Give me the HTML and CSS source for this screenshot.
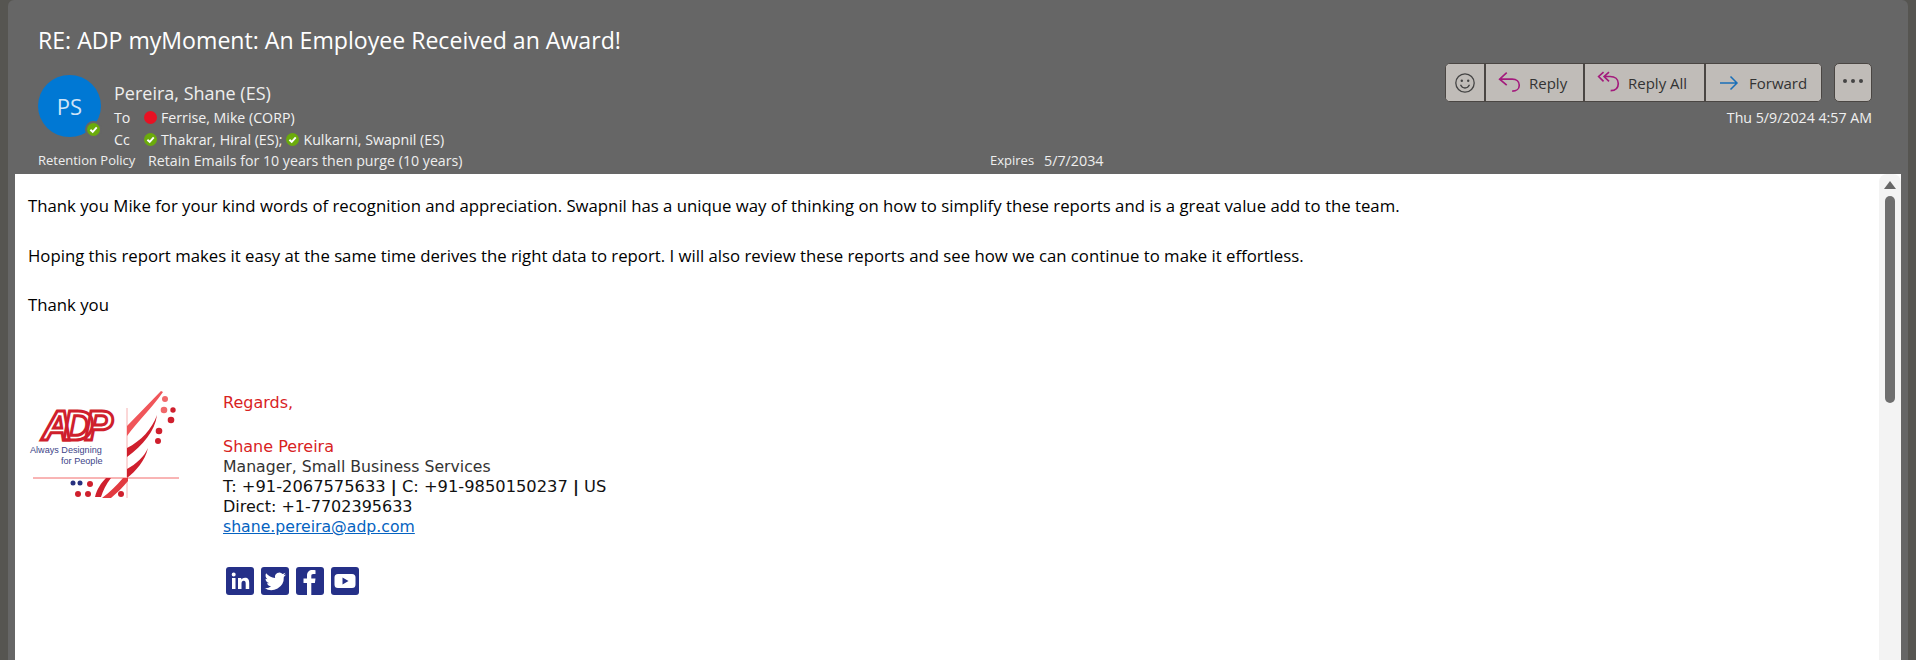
FILE: index.html
```html
<!DOCTYPE html>
<html lang="en">

<head>
    <meta charset="UTF-8">
    <meta name="viewport" content="width=device-width, initial-scale=1.0">
    <title>RE: ADP myMoment: An Employee Received an Award!</title>
    <link rel="stylesheet" href="styles.css">
</head>

<body>
    <div class="ventana">
        <header class="cabecera">
            <h1 class="asunto">RE: ADP myMoment: An Employee Received an Award!</h1>
            <div class="fila-remitente">
                <div class="avatar">PS
                    <span class="presencia presencia-avatar">
                        <svg viewBox="0 0 10 10"><path d="M2.6 5.2 4.4 6.9 7.5 3.4" /></svg>
                    </span>
                </div>
                <div class="datos">
                    <div class="remitente">Pereira, Shane (ES)</div>
                    <div class="linea linea-to">
                        <span class="etiqueta">To</span>
                        <span class="punto-rojo"></span>
                        <span>Ferrise, Mike (CORP)</span>
                    </div>
                    <div class="linea">
                        <span class="etiqueta">Cc</span>
                        <span class="presencia"><svg viewBox="0 0 10 10"><path d="M2.6 5.2 4.4 6.9 7.5 3.4" /></svg></span>
                        <span>Thakrar, Hiral (ES);</span>
                        <span class="presencia"><svg viewBox="0 0 10 10"><path d="M2.6 5.2 4.4 6.9 7.5 3.4" /></svg></span>
                        <span>Kulkarni, Swapnil (ES)</span>
                    </div>
                </div>
                <div class="acciones">
                    <div class="botones">
                        <div class="grupo">
                            <button class="boton boton-cara">
                                <svg class="icono" width="22" height="22" viewBox="0 0 22 22">
                                    <circle cx="11" cy="11" r="9.2" class="trazo-gris" />
                                    <circle cx="7.8" cy="8.8" r="1.2" class="relleno-gris" />
                                    <circle cx="14.2" cy="8.8" r="1.2" class="relleno-gris" />
                                    <path d="M6.5 12.8c1 2.2 2.6 3.2 4.5 3.2s3.5-1 4.5-3.2" class="trazo-gris" />
                                </svg>
                            </button>
                            <button class="boton boton-reply">
                                <svg class="icono" width="24" height="24" viewBox="0 0 22 22">
                                    <path d="M8 1.5 1.5 7.5 8 13M1.5 7.5H13c4 0 6.5 2.3 6.5 5.5s-2.5 5.5-6.5 5.5" class="trazo-magenta" />
                                </svg>
                                Reply
                            </button>
                            <button class="boton boton-replyall">
                                <svg class="icono" width="24" height="24" viewBox="0 0 22 22">
                                    <path d="M6 1 1.5 5 6 9.5M11 1 6.5 5 11 9.5M6.5 5H12c4.5 0 7.5 2.5 7.5 6.5s-2.5 6.5-7 6.5" class="trazo-magenta" />
                                </svg>
                                Reply All
                            </button>
                            <button class="boton boton-forward">
                                <svg class="icono" width="20" height="18" viewBox="0 0 20 18">
                                    <path d="M11.5 2.5 18 9l-6.5 6.5M18 9H1" class="trazo-azul" />
                                </svg>
                                Forward
                            </button>
                        </div>
                        <button class="boton boton-mas">
                            <span></span><span></span><span></span>
                        </button>
                    </div>
                    <div class="fecha">Thu 5/9/2024 4:57 AM</div>
                </div>
            </div>
            <div class="retencion">
                <span class="ret-etiqueta">Retention Policy</span>
                <span class="ret-valor">Retain Emails for 10 years then purge (10 years)</span>
                <span class="ret-expira">Expires</span>
                <span class="ret-fecha">5/7/2034</span>
            </div>
        </header>

        <div class="cuerpo">
            <main class="mensaje">
                <p class="parrafo">Thank you Mike for your kind words of recognition and appreciation. Swapnil has a unique way of thinking on how to simplify these reports and is a great value add to the team.</p>
                <p class="parrafo">Hoping this report makes it easy at the same time derives the right data to report. I will also review these reports and see how we can continue to make it effortless.</p>
                <p class="parrafo">Thank you</p>

                <div class="firma">
                    <!-- logo ADP dibujado a mano -->
                    <svg class="logo" width="151" height="108" viewBox="-5 0 151 108">
                        <text x="9" y="49" class="logo-marca">ADP</text>
                        <text x="-3" y="62" class="logo-lema">Always Designing</text>
                        <text x="28" y="73" class="logo-lema">for People</text>
                        <path d="M0 87H146" stroke="#f26a6a" stroke-width="1" />
                        <path d="M94 17V107" stroke="#f7b0b0" stroke-width="1" />
                        <path d="M94 35 128 0l2 1C118 18 105 30 94 45Z" fill="#f0565a" />
                        <path d="M94 57C108 50 119 38 124 24 122 40 110 54 94 66Z" fill="#cf1f2d" />
                        <path d="M94 78C103 73 111 66 115 57 112 70 103 80 94 87Z" fill="#cf1f2d" />
                        <path d="M62 106C64 98 68 92 73 87H78C73 93 70 100 68 106Z" fill="#cf1f2d" />
                        <path d="M69 107C77 101 83 95 90 87H95V90C90 96 84 102 78 107Z" fill="#e23a40" />
                        <circle cx="132" cy="8" r="3" fill="#f0686a" />
                        <circle cx="131" cy="19" r="3.3" fill="#f0686a" />
                        <circle cx="140" cy="19" r="2.7" fill="#cf1f2d" />
                        <circle cx="138" cy="29" r="3.3" fill="#cf1f2d" />
                        <circle cx="126" cy="40" r="3.3" fill="#cf1f2d" />
                        <circle cx="125" cy="50" r="3" fill="#cf1f2d" />
                        <circle cx="40" cy="92" r="2.5" fill="#26307f" />
                        <circle cx="47" cy="92" r="2.5" fill="#26307f" />
                        <circle cx="57" cy="93" r="3" fill="#cf1f2d" />
                        <circle cx="45" cy="103" r="3" fill="#cf1f2d" />
                        <circle cx="55" cy="103" r="3" fill="#cf1f2d" />
                        <circle cx="88" cy="103" r="3" fill="#cf1f2d" />
                    </svg>
                    <div class="firma-texto">
                        <div class="rojo">Regards,</div>
                        <div class="espacio"></div>
                        <div class="rojo">Shane Pereira</div>
                        <div class="gris">Manager, Small Business Services</div>
                        <div class="telefonos">T: +91-2067575633 <b>|</b> C: +91-9850150237 <b>|</b> US</div>
                        <div>Direct: +1-7702395633</div>
                        <a class="correo" href="#">shane.pereira@adp.com</a>
                        <div class="redes">
                            <span class="red">
                                <svg viewBox="0 0 28 28"><path d="M6 11h3.5v11H6zM7.7 5.5a2 2 0 1 1 0 4 2 2 0 0 1 0-4zM12 11h3.3v1.6c.7-1.1 2-1.9 3.7-1.900 3.100 0 4.200 2 4.200 5V22h-3.500v-5.500c0-1.600-.5-2.700-1.900-2.700-1.600 0-2.300 1.200-2.300 2.800V22H12z" /></svg>
                            </span>
                            <span class="red">
                                <svg viewBox="0 0 28 28"><path d="M25 7.5c-.8.4-1.700.6-2.500.7.9-.6 1.600-1.400 1.900-2.400-.9.500-1.800.9-2.800 1.100a4.400 4.400 0 0 0-7.500 4C10.500 10.700 7.300 9 5.100 6.300c-1.100 2-.6 4.500 1.400 5.900-.7 0-1.400-.2-2-.5 0 2.100 1.500 4 3.500 4.400-.6.200-1.300.2-2 .1.600 1.800 2.200 3 4.100 3.100A9 9 0 0 1 3.500 21.100 12.500 12.500 0 0 0 22.800 10c.9-.7 1.600-1.500 2.200-2.500z" /></svg>
                            </span>
                            <span class="red">
                                <svg viewBox="0 0 28 28"><path d="M11 28V16H7.500v-4.500H11V8.500C11 5 13.200 3 16.400 3c1.500 0 2.800.1 3.100.2v3.900h-2.200c-1.700 0-2 .8-2 2v2.400h4.200l-.6 4.500h-3.600v12z" /></svg>
                            </span>
                            <span class="red">
                                <svg viewBox="0 0 28 28"><path d="M7 7h14a3.500 3.500 0 0 1 3.500 3.500v7A3.500 3.500 0 0 1 21 21H7a3.500 3.500 0 0 1-3.500-3.500v-7A3.500 3.500 0 0 1 7 7zm4.500 3.500v7l6-3.500z" /></svg>
                            </span>
                        </div>
                    </div>
                </div>
            </main>
            <div class="scroll">
                <span class="scroll-flecha"></span>
                <span class="scroll-barra"></span>
            </div>
        </div>
    </div>
</body>

</html>
```

FILE: styles.css
```css
html,
body {
    height: 100%;
}

body {
    margin: 0;
    padding: 0;
    background-color: #565551;
    font-family: "Open Sans", "Noto Sans", sans-serif;
    overflow: hidden;
}

.ventana {
    display: flex;
    flex-direction: column;
    height: 660px;
    margin: 0 8px;
    background-color: #666;
    border-radius: 6px 6px 0 0;
}

.cabecera {
    height: 174px;
    padding: 0 36px 0 30px;
    color: #fff;
    flex: none;
    box-sizing: border-box;
}

.asunto {
    margin: 0;
    padding-top: 24px;
    font-size: 23.1px;
    line-height: 32px;
    font-weight: 400;
}

.fila-remitente {
    display: flex;
    margin-top: 19px;
    height: 75px;
}

.avatar {
    position: relative;
    width: 63px;
    height: 62px;
    border-radius: 50%;
    background-color: #0078d4;
    color: #cfe4f7;
    font-size: 22px;
    line-height: 62px;
    text-align: center;
    flex: none;
}

.presencia {
    display: inline-flex;
    width: 13px;
    height: 13px;
    border-radius: 50%;
    background-color: #6bab0c;
    flex: none;
}

.presencia svg {
    width: 13px;
    height: 13px;
    fill: none;
    stroke: #fff;
    stroke-width: 1.5;
}

.presencia-avatar {
    position: absolute;
    right: -1px;
    bottom: -1px;
    border: 2px solid #666;
}

.datos {
    margin-left: 13px;
    flex: none;
    font-size: 14px;
    color: #f2f2f2;
}

.remitente {
    font-size: 18px;
    line-height: 23px;
    margin-top: 7px;
    margin-bottom: 1px;
    color: #eee;
}

.linea {
    display: flex;
    align-items: center;
    gap: 4px;
    height: 23px;
    font-size: 14.2px;
}

.linea-to {
    height: 22px;
}

.etiqueta {
    width: 26px;
}

.punto-rojo {
    width: 13px;
    height: 13px;
    border-radius: 50%;
    background-color: #e81123;
    flex: none;
}

.acciones {
    margin-left: auto;
    margin-top: -12px;
    display: flex;
    flex-direction: column;
    align-items: flex-end;
}

.botones {
    display: flex;
    gap: 12px;
}

.grupo {
    display: flex;
    border: 1px solid #4a4643;
    border-radius: 5px;
    overflow: hidden;
    background-color: #c0bcb8;
}

.boton {
    display: flex;
    align-items: center;
    height: 37px;
    padding: 0;
    border: none;
    background-color: #c0bcb8;
    color: #333;
    font-family: "Open Sans", sans-serif;
    font-size: 15px;
}

.grupo .boton + .boton {
    border-left: 2px solid #4a4643;
}

.boton-cara {
    width: 38px;
    justify-content: center;
}

.boton-reply {
    width: 99px;
    padding-left: 12px;
    gap: 7px;
}

.boton-replyall {
    width: 121px;
    padding-left: 12px;
    gap: 7px;
}

.boton-forward {
    width: 117px;
    padding-left: 13px;
    gap: 10px;
}

.boton-mas {
    width: 38px;
    height: 39px;
    justify-content: center;
    gap: 4px;
    border: 1px solid #4a4643;
    border-radius: 5px;
    padding-bottom: 3px;
}

.boton-mas span {
    width: 4px;
    height: 4px;
    border-radius: 50%;
    background-color: #444;
}

.icono {
    flex: none;
}

.trazo-gris {
    fill: none;
    stroke: #444;
    stroke-width: 1.3;
}

.relleno-gris {
    fill: #444;
}

.trazo-magenta {
    fill: none;
    stroke: #a31a7c;
    stroke-width: 1.5;
}

.trazo-azul {
    fill: none;
    stroke: #1a6fb8;
    stroke-width: 1.5;
}

.fecha {
    margin-top: 6px;
    font-size: 14.2px;
    line-height: 20px;
    color: #f0f0f0;
}

.retencion {
    display: flex;
    height: 20px;
    align-items: center;
    font-size: 13px;
    color: #eee;
}

.ret-etiqueta {
    width: 110px;
}

.ret-valor {
    width: 842px;
    font-size: 14.2px;
}

.ret-expira {
    width: 54px;
}

.ret-fecha {
    font-size: 14.3px;
}

.cuerpo {
    display: flex;
    flex: 1;
    margin: 0 7px;
    background-color: #fff;
    min-height: 0;
}

.mensaje {
    flex: 1;
    padding: 21px 13px 0 13px;
    color: #000;
}

.parrafo {
    margin: 0 0 27.5px 0;
    line-height: 22px;
    font-size: 16.75px;
}

.firma {
    display: flex;
    margin-top: 75px;
}

.logo {
    flex: none;
    overflow: visible;
}

.logo-marca {
    font-family: "Liberation Sans", sans-serif;
    font-weight: 700;
    font-style: italic;
    font-size: 42px;
    fill: #fff;
    stroke: #cf1f2d;
    stroke-width: 3px;
    letter-spacing: -9px;
}

.logo-lema {
    font-family: "Liberation Sans", sans-serif;
    font-size: 9.1px;
    fill: #3d4488;
}

.firma-texto {
    margin-left: 44px;
    margin-top: 2px;
    font-family: "DejaVu Sans", Verdana, sans-serif;
    font-size: 16px;
    line-height: 20px;
    color: #111;
}

.espacio {
    height: 24px;
}

.rojo {
    color: #d8231f;
}

.gris {
    color: #333;
    font-size: 15.7px;
}

.telefonos {
    font-size: 16.3px;
}

.correo {
    display: block;
    color: #0563c1;
    font-size: 15.7px;
}

.redes {
    display: flex;
    gap: 7px;
    margin-top: 30px;
    margin-left: 3px;
}

.red {
    display: block;
    width: 28px;
    height: 28px;
    border-radius: 3px;
    background-color: #253088;
}

.red svg {
    display: block;
    width: 28px;
    height: 28px;
    fill: #fff;
}

.scroll {
    position: relative;
    flex: none;
    width: 22px;
    background-color: #f3f3f3;
    border-radius: 8px 8px 0 0;
}

.scroll-flecha {
    position: absolute;
    top: 7px;
    left: 5px;
    border-left: 6px solid transparent;
    border-right: 6px solid transparent;
    border-bottom: 8px solid #666;
}

.scroll-barra {
    position: absolute;
    top: 22px;
    left: 6px;
    width: 10px;
    height: 207px;
    border-radius: 5px;
    background-color: #6e6e6e;
}
```
